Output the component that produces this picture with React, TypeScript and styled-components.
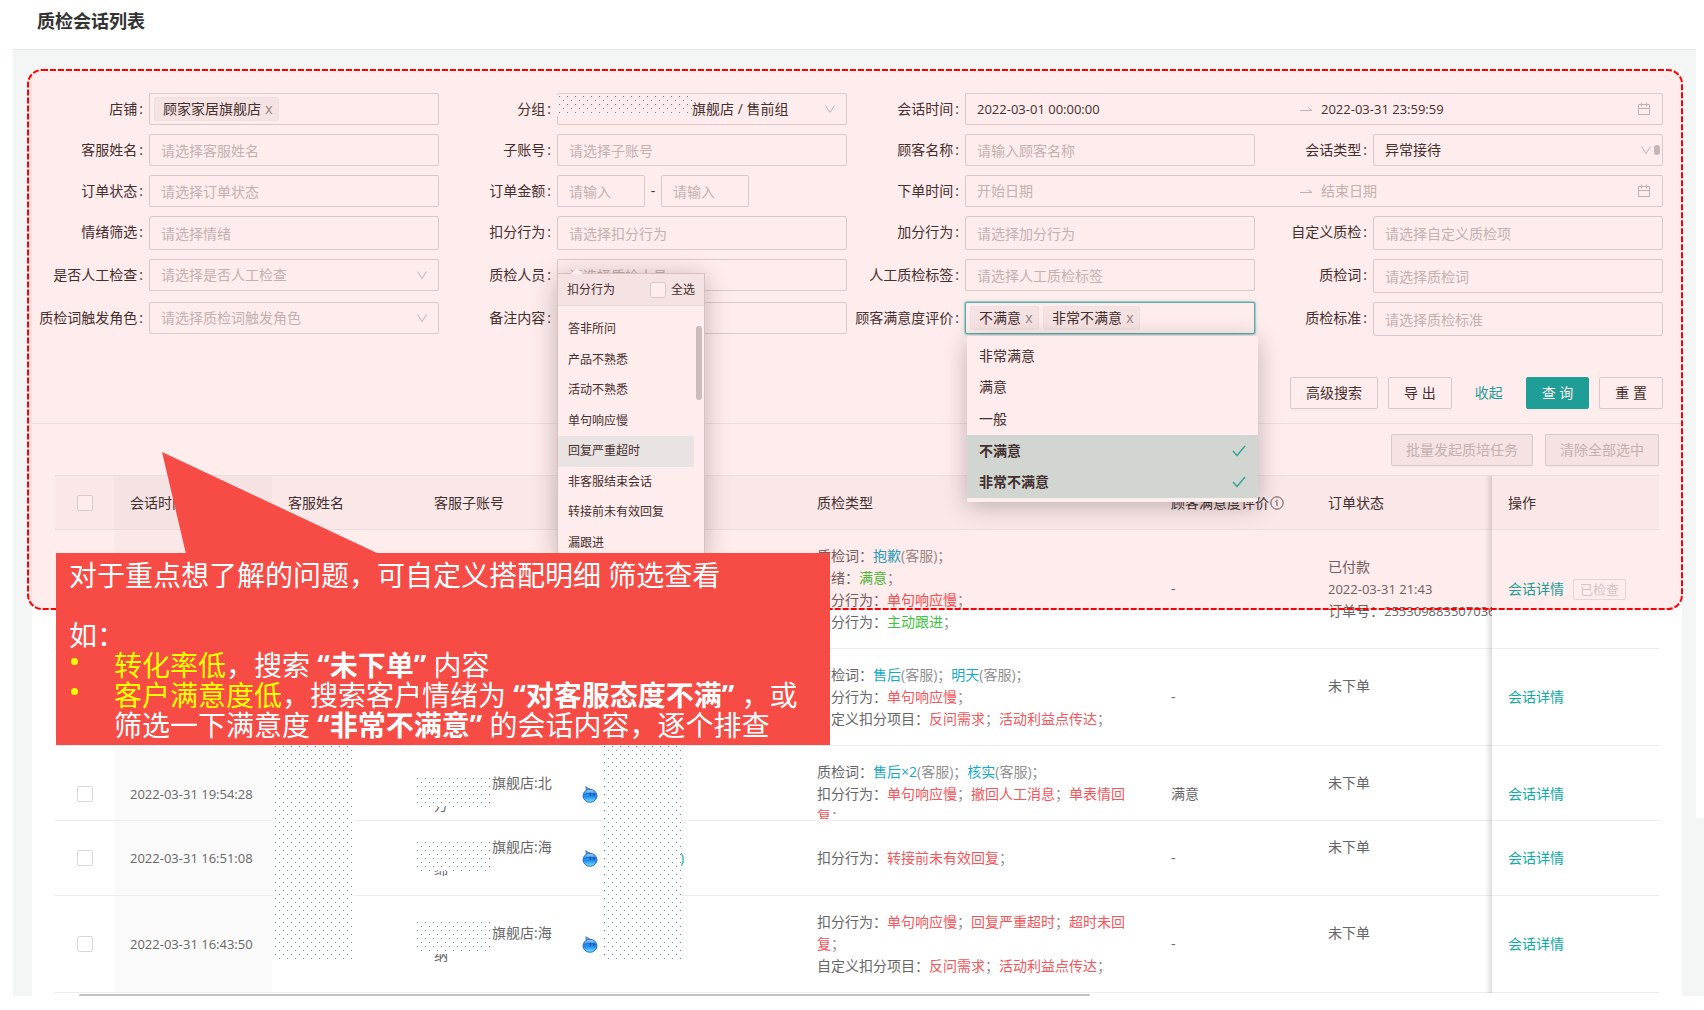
import React, { useId } from "react";
import styled, { createGlobalStyle, css } from "styled-components";

const color = {
  teal: "#0eaba5",
  text: "#333333",
  body: "#666666",
  hint: "#bfbfbf",
  border: "#d9d9d9",
  line: "#ededed",
  page: "#f3f6f5",
  callout: "#f74b46",
};

const GlobalStyle = createGlobalStyle`
  *, *::before, *::after { box-sizing: border-box; }
  body {
    margin: 0;
    background: #ffffff;
    color: ${color.text};
    font: 14px/22px "Open Sans", "Noto Sans CJK SC", sans-serif;
    overflow-x: hidden;
  }
  input, select, button { font: inherit; color: inherit; }
  button { cursor: pointer; }
`;

/* ---------- page frame ---------- */

const Header = styled.header`
  height: 50px;
  margin: 0 8px 0 13px;
  padding: 0 24px;
  display: flex;
  align-items: center;
  border-bottom: 1px solid #e8e8e8;
`;

const Title = styled.h1`
  margin: 0 0 8px;
  font-size: 18px;
  line-height: 26px;
  font-weight: 700;
`;

const Main = styled.main`
  display: flex;
  align-items: flex-start;
  margin-left: 13px;
  background: ${color.page};
`;

const Rail = styled.div`
  width: 8px;
  height: 768px;
  background: #ffffff;
`;

const Card = styled.section`
  position: relative;
  flex: 1;
  min-width: 0;
  margin: 20px 14px 0 19px;
  background: #ffffff;
`;

/* ---------- filter form ---------- */

const Form = styled.form`
  padding: 23px 19px 14px 7px;
  border-bottom: 1px solid ${color.line};
`;

const Grid = styled.div`
  display: grid;
  grid-template-columns: repeat(4, minmax(0, 1fr));
  column-gap: 8px;
  row-gap: 9px;
  align-items: start;
`;

const Item = styled.div<{ $span?: number }>`
  display: flex;
  min-width: 0;
  grid-column: span ${(p) => p.$span || 1};
`;

const Label = styled.label`
  flex: none;
  width: 110px;
  display: flex;
  justify-content: flex-end;
  padding-right: 6px;
  line-height: 32px;
  white-space: nowrap;
  &::after {
    content: ":";
    margin-left: 2px;
  }
`;

const Slot = styled.div`
  position: relative;
  flex: 1;
  min-width: 0;
`;

const frame = css`
  border: 1px solid ${color.border};
  border-radius: 2px;
  background: #ffffff;
`;

const TextBox = styled.input<{ $tall?: boolean }>`
  ${frame};
  display: block;
  width: 100%;
  height: ${(p) => (p.$tall ? 34 : 32)}px;
  padding: 0 11px;
  outline: none;
  &::placeholder { color: ${color.hint}; opacity: 1; }
`;

const Picker = styled.select<{ $empty?: boolean; $indent?: boolean }>`
  ${frame};
  appearance: none;
  display: block;
  width: 100%;
  height: 32px;
  padding: 0 32px 0 ${(p) => (p.$indent ? 134 : 11)}px;
  color: ${(p) => (p.$empty ? color.hint : color.text)};
  outline: none;
`;

const Caret = styled.svg`
  position: absolute;
  right: 11px;
  top: 10px;
  width: 12px;
  height: 12px;
  pointer-events: none;
`;

const Grip = styled.span`
  position: absolute;
  right: 3px;
  top: 11px;
  width: 6px;
  height: 10px;
  border-radius: 3px;
  background: #c4c4c4;
`;

const TagBox = styled.div<{ $active?: boolean }>`
  ${frame};
  display: flex;
  align-items: center;
  gap: 4px;
  height: 32px;
  padding: 0 4px;
  ${(p) =>
    p.$active &&
    css`
      border-color: #4bbab6;
      box-shadow: 0 0 0 1px #4bbab666, 0 0 4px #4bbab666;
    `}
`;

const Tag = styled.span`
  display: flex;
  align-items: center;
  gap: 3px;
  height: 24px;
  padding: 0 4px 0 8px;
  border: 1px solid #f0f0f0;
  border-radius: 2px;
  background: #f5f5f5;
  white-space: nowrap;
`;

const TagClose = styled.button`
  padding: 0;
  width: 10px;
  border: 0;
  background: none;
  color: #8c8c8c;
  line-height: 22px;
`;

const TagInput = styled.input`
  flex: 1;
  min-width: 0;
  border: 0;
  outline: none;
  background: none;
`;

const Range = styled.div`
  ${frame};
  display: flex;
  align-items: center;
  height: 32px;
  padding: 0 11px;
`;

const RangeInput = styled.input`
  flex: 1;
  min-width: 0;
  padding: 0;
  border: 0;
  outline: none;
  background: none;
  font-size: 13px;
  &::placeholder { color: ${color.hint}; opacity: 1; font-size: 14px; }
`;

const RangeArrow = styled.svg`
  flex: none;
  width: 28px;
  height: 12px;
`;

const Amount = styled.div`
  display: grid;
  grid-template-columns: 88px 16px 88px;
  align-items: center;
  text-align: center;
`;

const Actions = styled.div`
  display: flex;
  justify-content: flex-end;
  gap: 10px;
  margin-top: 41px;
`;

type Kind = "plain" | "primary" | "link" | "muted";

const Button = styled.button<{ $kind?: Kind }>`
  height: 32px;
  padding: 0 15px;
  border-radius: 2px;
  border: 1px solid ${color.border};
  background: #ffffff;
  box-shadow: 0 2px 0 rgba(0, 0, 0, 0.02);
  white-space: nowrap;
  ${(p) =>
    p.$kind === "primary" &&
    css`
      border-color: ${color.teal};
      background: ${color.teal};
      color: #ffffff;
    `}
  ${(p) =>
    p.$kind === "link" &&
    css`
      padding: 0 12px;
      border-color: transparent;
      background: none;
      box-shadow: none;
      color: ${color.teal};
    `}
  ${(p) =>
    p.$kind === "muted" &&
    css`
      padding: 0 14px;
      background: #f5f5f5;
      color: ${color.hint};
      cursor: not-allowed;
    `}
`;

/* ---------- popups ---------- */

const Popup = styled.div`
  position: absolute;
  z-index: 5;
  background: #ffffff;
  box-shadow: 0 4px 24px rgba(0, 0, 0, 0.26);
`;

const DeductPopup = styled(Popup)`
  top: 57px;
  left: 0;
  width: 148px;
  border: 1px solid #d4d0d0;
  font-size: 12px;
  &::before {
    content: "";
    position: absolute;
    top: -6px;
    left: 13px;
    border: 6px solid transparent;
    border-top: 0;
    border-bottom-color: #ffffff;
  }
`;

const DeductHead = styled.div`
  display: flex;
  align-items: center;
  justify-content: space-between;
  height: 32px;
  padding: 0 9px;
  border-bottom: 1px solid #e8e8e8;
  background: #f5f5f5;
`;

const CheckLabel = styled.label`
  display: flex;
  align-items: center;
  gap: 5px;
`;

const Check = styled.input.attrs({ type: "checkbox" })`
  appearance: none;
  display: block;
  width: 16px;
  height: 16px;
  margin: 0;
  border: 1px solid ${color.border};
  border-radius: 2px;
  background: #ffffff;
`;

const DeductList = styled.ul`
  display: grid;
  grid-auto-rows: 1fr;
  height: 244px;
  margin: 8px 10px 0 0;
  padding: 0;
  list-style: none;
`;

const DeductOption = styled.li<{ $on?: boolean }>`
  display: flex;
  align-items: center;
  padding-left: 10px;
  background: ${(p) => (p.$on ? "#f9f9f6" : "transparent")};
  background: ${(p) => (p.$on ? "#e8f6f4" : "transparent")};
`;

const Thumb = styled.span`
  position: absolute;
  right: 2px;
  top: 52px;
  width: 6px;
  height: 74px;
  border-radius: 3px;
  background: #cacaca;
`;

const RatePopup = styled(Popup)`
  top: 34px;
  left: 2px;
  right: -3px;
  padding: 4px 0;
  border-radius: 2px;
`;

const RateList = styled.ul`
  display: grid;
  grid-auto-rows: 1fr;
  height: 158px;
  margin: 0;
  padding: 0;
  list-style: none;
`;

const RateOption = styled.li<{ $on?: boolean }>`
  display: flex;
  align-items: center;
  justify-content: space-between;
  padding: 0 12px;
  font-weight: ${(p) => (p.$on ? 700 : 400)};
  background: ${(p) => (p.$on ? "#cfe8e1" : "transparent")};
`;

/* ---------- table ---------- */

const Section = styled.div`
  padding: 10px 23px 0;
`;

const Toolbar = styled.div`
  display: flex;
  justify-content: flex-end;
  gap: 12px;
  margin-bottom: 9px;
`;

const TableWrap = styled.div`
  position: relative;
`;

const Table = styled.table`
  width: 100%;
  table-layout: fixed;
  border-collapse: separate;
  border-spacing: 0;
  color: ${color.body};
`;

const pinned = css`
  position: relative;
  &::before {
    content: "";
    position: absolute;
    top: 0;
    bottom: -1px;
    left: -7px;
    width: 7px;
    background: linear-gradient(to left, rgba(0, 0, 0, 0.13), rgba(0, 0, 0, 0));
  }
`;

const Th = styled.th<{ $sorted?: boolean; $pinned?: boolean }>`
  height: 55px;
  padding: 0 16px;
  border-top: 1px solid ${color.line};
  border-bottom: 1px solid ${color.line};
  background: ${(p) => (p.$sorted ? "#f5f5f5" : "#fafafa")};
  color: ${color.text};
  font-weight: 400;
  text-align: left;
  white-space: nowrap;
  ${(p) => p.$pinned && pinned}
`;

const Td = styled.td<{ $sorted?: boolean; $pinned?: boolean; $cut?: boolean }>`
  padding: 15px 16px ${(p) => (p.$cut ? 1 : 15)}px;
  border-bottom: 1px solid ${color.line};
  background: ${(p) => (p.$sorted ? "#fafafa" : "#ffffff")};
  ${(p) => p.$pinned && pinned}
`;

const Clip = styled.div`
  height: 58px;
  clip-path: inset(0 -40px 0 -40px);
`;

const ClipBody = styled.div`
  display: flex;
  flex-direction: column;
  justify-content: center;
  min-height: 66px;
`;

const Center = styled.div`
  display: flex;
  justify-content: center;
`;

const Stamp = styled.time`
  font-size: 13px;
  white-space: nowrap;
`;

const Lines = styled.div`
  min-height: 44px;
  white-space: nowrap;
`;

const Digits = styled.span`
  font-size: 13px;
`;

const Account = styled.div`
  position: relative;
  height: 44px;
  white-space: nowrap;
`;

const FirstHalf = styled.span`
  display: block;
  padding-left: 58px;
`;

const Buyer = styled.div`
  display: flex;
  align-items: center;
  gap: 82px;
  color: ${color.teal};
`;

const TypeText = styled.div`
  padding-right: 6px;
`;

const Word = styled.span<{ $tone: Tone }>`
  color: ${(p) => tones[p.$tone]};
`;

const Soft = styled.span`
  color: #8f8f8f;
`;

const HeadLabel = styled.span`
  display: flex;
  align-items: center;
  gap: 1px;
`;

const Ops = styled.div`
  display: flex;
  align-items: center;
  gap: 9px;
`;

const Link = styled.a`
  color: ${color.teal};
  text-decoration: none;
  white-space: nowrap;
`;

const DoneButton = styled.button`
  height: 21px;
  padding: 0 6px;
  border: 1px solid #e6e6e6;
  border-radius: 2px;
  background: none;
  color: #d4d4d4;
  font-size: 13px;
  line-height: 19px;
  white-space: nowrap;
`;

const ScrollThumb = styled.div`
  width: 63%;
  height: 2px;
  margin: 1px 0 0 24px;
  border-radius: 1px;
  background: #c1c1c1;
`;

/* ---------- masks, highlight and callout ---------- */

const MaskSvg = styled.svg<{ $x: number; $y: number; $w: number; $h: number }>`
  position: absolute;
  z-index: 2;
  left: ${(p) => p.$x}px;
  top: ${(p) => p.$y}px;
  width: ${(p) => p.$w}px;
  height: ${(p) => p.$h}px;
  background: #ffffff;
`;

const Highlight = styled.svg`
  position: absolute;
  z-index: 10;
  top: -1px;
  left: -5px;
  width: calc(100% + 6px);
  height: 541px;
  pointer-events: none;
`;

const HighlightBox = styled.rect`
  x: 1px;
  y: 1px;
  width: calc(100% - 2px);
  height: 539px;
  rx: 14px;
  fill: rgba(255, 0, 0, 0.075);
  stroke: #ff0000;
  stroke-width: 2px;
  stroke-dasharray: 6 2;
`;

const Callout = styled.aside`
  position: absolute;
  z-index: 20;
  top: 483px;
  left: 24px;
  width: 774px;
  height: 192px;
  padding: 7px 13px;
  background: ${color.callout};
  color: #ffffff;
  font-size: 28px;
  line-height: 30px;
`;

const Tail = styled.svg`
  position: absolute;
  left: 106px;
  top: -101px;
  width: 217px;
  height: 102px;
`;

const Para = styled.p`
  margin: 0;
  min-height: 30px;
`;

const Bullets = styled.ul`
  margin: 0;
  padding: 0 0 0 45px;
  list-style: none;
`;

const Bullet = styled.li`
  position: relative;
  white-space: nowrap;
  &::before {
    content: "";
    position: absolute;
    left: -43px;
    top: 8px;
    width: 7px;
    height: 7px;
    border-radius: 50%;
    background: #ffff00;
  }
`;

const Yellow = styled.span`
  color: #ffff00;
`;

/* ---------- small drawings ---------- */

function Mask({ x, y, w, h }: { x: number; y: number; w: number; h: number }) {
  const id = useId();
  return (
    <MaskSvg $x={x} $y={y} $w={w} $h={h} aria-hidden>
      <defs>
        <pattern id={id} width="8" height="8" patternUnits="userSpaceOnUse">
          <rect x="2" y="1" width="1" height="1" fill="#4f8abf" />
          <rect x="6" y="5" width="1" height="1" fill="#4f8abf" />
        </pattern>
      </defs>
      <rect width="100%" height="100%" fill={`url(#${id})`} />
    </MaskSvg>
  );
}

const Down = () => (
  <Caret viewBox="0 0 12 12" fill="none" stroke="#bfbfbf">
    <path d="M1.5 2.5 6 9.5l4.5-7" />
  </Caret>
);

const Calendar = () => (
  <svg width="14" height="14" viewBox="0 0 14 14" fill="none" stroke="#bfbfbf">
    <path d="M1.5 2.5h11v10h-11zM1.5 6.5h11M4.5 0.5v4M9.5 0.5v4" />
  </svg>
);

const Tick = () => (
  <svg width="14" height="12" viewBox="0 0 14 12" fill="none" stroke="#2fb0ab" strokeWidth="1.5">
    <path d="M1 6l4 4.5L13 1" />
  </svg>
);

const Info = () => (
  <svg width="14" height="14" viewBox="0 0 14 14" fill="none" stroke="#595959">
    <circle cx="7" cy="7" r="6.2" />
    <path d="M7 6.2v4M7 3.6v1.4M5.4 5.5l1.6.7" />
  </svg>
);

const Wang = () => {
  const id = useId();
  return (
    <svg width="16" height="17" viewBox="0 0 16 17">
      <defs>
        <linearGradient id={id} x1="0" y1="0" x2="0" y2="1">
          <stop offset="0" stopColor="#b9dcfa" />
          <stop offset="0.3" stopColor="#3f9bee" />
          <stop offset="0.55" stopColor="#1c8bf0" />
          <stop offset="1" stopColor="#7fe6ff" />
        </linearGradient>
      </defs>
      <path d="M4.600 5C4 3.500 3.400 2 4 .6 4.800 2 7 2 8.600 3.600z" fill="#5d9be0" stroke="#2c6cc4" strokeWidth=".6" />
      <ellipse cx="8" cy="9.800" rx="7" ry="6.500" fill={`url(#${id})`} stroke="#1f62bd" strokeWidth=".9" />
      <path d="M1.600 8.400Q8 6 14.400 8.400" fill="none" stroke="#1a6fd8" strokeWidth="1" />
      <ellipse cx="8.400" cy="8.600" rx=".8" ry="1.300" fill="#0d3f8f" />
      <ellipse cx="11.800" cy="8.600" rx=".8" ry="1.300" fill="#0d3f8f" />
    </svg>
  );
};

/* ---------- field helpers ---------- */

function TextField({ label, hint, tall, children }: { label: string; hint?: string; tall?: boolean; children?: React.ReactNode }) {
  const id = useId();
  return (
    <Item>
      <Label htmlFor={id}>{label}</Label>
      <Slot>
        <TextBox id={id} placeholder={hint} $tall={tall} />
        {children}
      </Slot>
    </Item>
  );
}

function SelectField({ label, value, empty, indent, children }: { label: string; value: string; empty?: boolean; indent?: boolean; children?: React.ReactNode }) {
  const id = useId();
  return (
    <Item>
      <Label htmlFor={id}>{label}</Label>
      <Slot>
        <Picker id={id} $empty={empty} $indent={indent}>
          <option>{value}</option>
        </Picker>
        <Down />
        {children}
      </Slot>
    </Item>
  );
}

function TagField({ label, tags, active, children }: { label: string; tags: string[]; active?: boolean; children?: React.ReactNode }) {
  const id = useId();
  return (
    <Item>
      <Label htmlFor={id}>{label}</Label>
      <Slot>
        <TagBox $active={active}>
          {tags.map((t) => (
            <Tag key={t}>
              {t}
              <TagClose type="button">x</TagClose>
            </Tag>
          ))}
          <TagInput id={id} />
        </TagBox>
        {children}
      </Slot>
    </Item>
  );
}

function RangeField({ label, from, to }: { label: string; from?: string; to?: string }) {
  const id = useId();
  return (
    <Item $span={2}>
      <Label htmlFor={id}>{label}</Label>
      <Slot>
        <Range>
          <RangeInput id={id} defaultValue={from} placeholder="开始日期" />
          <RangeArrow viewBox="0 0 28 12" fill="none" stroke="#bfbfbf">
            <path d="M7 7.500h12l-4-3" />
          </RangeArrow>
          <RangeInput aria-label={`${label}结束`} defaultValue={to} placeholder="结束日期" />
          <Calendar />
        </Range>
      </Slot>
    </Item>
  );
}

function AmountField() {
  const id = useId();
  return (
    <Item>
      <Label htmlFor={id}>订单金额</Label>
      <Slot>
        <Amount>
          <TextBox id={id} placeholder="请输入" />
          <span>-</span>
          <TextBox aria-label="最高订单金额" placeholder="请输入" />
        </Amount>
      </Slot>
    </Item>
  );
}

/* ---------- data ---------- */

type Tone = "blue" | "green" | "red";
const tones: Record<Tone, string> = { blue: "#12aac6", green: "#3dc43d", red: "#f5555a" };

type Hit = { text: string; tone: Tone; by?: string };
type Line = { name: string; hits: Hit[] };
type Row = {
  time: string;
  account?: { first: string; second: string; maskTop: number; maskHeight: number };
  buyer?: string;
  lines: Line[];
  rate: string;
  order: React.ReactNode;
  done?: boolean;
  cut?: boolean;
};

const red = (text: string): Hit => ({ text, tone: "red" });
const blue = (text: string): Hit => ({ text, tone: "blue", by: "(客服)" });

const rows: Row[] = [
  {
    time: "2022-03-31 21:40:16",
    lines: [
      { name: "质检词", hits: [blue("抱歉")] },
      { name: "情绪", hits: [{ text: "满意", tone: "green" }] },
      { name: "扣分行为", hits: [red("单句响应慢")] },
      { name: "加分行为", hits: [{ text: "主动跟进", tone: "green" }] },
    ],
    rate: "-",
    order: (
      <>
        已付款
        <br />
        <Digits>2022-03-31 21:43</Digits>
        <br />
        订单号：<Digits>2553098835070360</Digits>
      </>
    ),
    done: true,
  },
  {
    time: "2022-03-31 20:12:45",
    lines: [
      { name: "质检词", hits: [blue("售后"), blue("明天")] },
      { name: "扣分行为", hits: [red("单句响应慢")] },
      { name: "自定义扣分项目", hits: [red("反问需求"), red("活动利益点传达")] },
    ],
    rate: "-",
    order: "未下单",
  },
  {
    time: "2022-03-31 19:54:28",
    account: { first: "旗舰店:北", second: "方", maskTop: 5, maskHeight: 30 },
    lines: [
      { name: "质检词", hits: [blue("售后×2"), blue("核实")] },
      { name: "扣分行为", hits: [red("单句响应慢"), red("撤回人工消息"), red("单表情回复")] },
    ],
    rate: "满意",
    order: "未下单",
    cut: true,
  },
  {
    time: "2022-03-31 16:51:08",
    account: { first: "旗舰店:海", second: "绵", maskTop: 5, maskHeight: 30 },
    buyer: ")",
    lines: [{ name: "扣分行为", hits: [red("转接前未有效回复")] }],
    rate: "-",
    order: "未下单",
  },
  {
    time: "2022-03-31 16:43:50",
    account: { first: "旗舰店:海", second: "纳", maskTop: -1, maskHeight: 33 },
    lines: [
      { name: "扣分行为", hits: [red("单句响应慢"), red("回复严重超时"), red("超时未回复")] },
      { name: "自定义扣分项目", hits: [red("反问需求"), red("活动利益点传达")] },
    ],
    rate: "-",
    order: "未下单",
  },
];

const deductions = ["答非所问", "产品不熟悉", "活动不熟悉", "单句响应慢", "回复严重超时", "非客服结束会话", "转接前未有效回复", "漏跟进"];
const rates = ["非常满意", "满意", "一般", "不满意", "非常不满意"];

function Cell({ cut, sorted, pin, children }: { cut?: boolean; sorted?: boolean; pin?: boolean; children?: React.ReactNode }) {
  return (
    <Td $cut={cut} $sorted={sorted} $pinned={pin}>
      {cut ? (
        <Clip>
          <ClipBody>{children}</ClipBody>
        </Clip>
      ) : (
        children
      )}
    </Td>
  );
}

function RecordRow({ row }: { row: Row }) {
  const { cut, account } = row;
  return (
    <tr>
      <Cell cut={cut}>
        <Center>
          <Check aria-label={`选择 ${row.time}`} />
        </Center>
      </Cell>
      <Cell cut={cut} sorted>
        <Stamp>{row.time}</Stamp>
      </Cell>
      <Cell cut={cut} />
      <Cell cut={cut}>
        {account && (
          <Account>
            <FirstHalf>{account.first}</FirstHalf>
            {account.second}
            <Mask x={-19} y={account.maskTop} w={77} h={account.maskHeight} />
          </Account>
        )}
      </Cell>
      <Cell cut={cut}>
        <Buyer>
          <Wang />
          {row.buyer}
        </Buyer>
      </Cell>
      <Cell cut={cut}>
        <TypeText>
          {row.lines.map((l) => (
            <div key={l.name}>
              {l.name}：
              {l.hits.map((h) => (
                <React.Fragment key={h.text}>
                  <Word $tone={h.tone}>{h.text}</Word>
                  <Soft>{h.by}；</Soft>
                </React.Fragment>
              ))}
            </div>
          ))}
        </TypeText>
      </Cell>
      <Cell cut={cut}>{row.rate}</Cell>
      <Cell cut={cut}>
        <Lines>{row.order}</Lines>
      </Cell>
      <Cell cut={cut} pin>
        <Ops>
          <Link href="#detail">会话详情</Link>
          {row.done && <DoneButton disabled>已检查</DoneButton>}
        </Ops>
      </Cell>
    </tr>
  );
}

export default function App() {
  return (
    <>
      <GlobalStyle />
      <Header>
        <Title>质检会话列表</Title>
      </Header>
      <Main>
        <Card>
          <Form>
            <Grid>
              <TagField label="店铺" tags={["顾家家居旗舰店"]} />
              <SelectField label="分组" value="旗舰店 / 售前组" indent>
                <Mask x={0} y={2} w={135} h={21} />
              </SelectField>
              <RangeField label="会话时间" from="2022-03-01 00:00:00" to="2022-03-31 23:59:59" />

              <TextField label="客服姓名" hint="请选择客服姓名" />
              <TextField label="子账号" hint="请选择子账号" />
              <TextField label="顾客名称" hint="请输入顾客名称" />
              <SelectField label="会话类型" value="异常接待">
                <Grip />
              </SelectField>

              <TextField label="订单状态" hint="请选择订单状态" />
              <AmountField />
              <RangeField label="下单时间" />

              <TextField label="情绪筛选" hint="请选择情绪" tall />
              <TextField label="扣分行为" hint="请选择扣分行为" tall>
                <DeductPopup>
                  <DeductHead>
                    扣分行为
                    <CheckLabel>
                      <Check />
                      全选
                    </CheckLabel>
                  </DeductHead>
                  <DeductList role="listbox" aria-label="扣分行为">
                    {deductions.map((d) => (
                      <DeductOption key={d} role="option" $on={d === "回复严重超时"}>
                        {d}
                      </DeductOption>
                    ))}
                  </DeductList>
                  <Thumb />
                </DeductPopup>
              </TextField>
              <TextField label="加分行为" hint="请选择加分行为" tall />
              <TextField label="自定义质检" hint="请选择自定义质检项" tall />

              <SelectField label="是否人工检查" value="请选择是否人工检查" empty />
              <TextField label="质检人员" hint="请选择质检人员" />
              <TextField label="人工质检标签" hint="请选择人工质检标签" />
              <TextField label="质检词" hint="请选择质检词" tall />

              <SelectField label="质检词触发角色" value="请选择质检词触发角色" empty />
              <TextField label="备注内容" />
              <TagField label="顾客满意度评价" tags={["不满意", "非常不满意"]} active>
                <RatePopup>
                  <RateList role="listbox" aria-label="顾客满意度评价">
                    {rates.map((r, i) => (
                      <RateOption key={r} role="option" $on={i > 2}>
                        {r}
                        {i > 2 && <Tick />}
                      </RateOption>
                    ))}
                  </RateList>
                </RatePopup>
              </TagField>
              <TextField label="质检标准" hint="请选择质检标准" tall />
            </Grid>
            <Actions>
              <Button type="button">高级搜索</Button>
              <Button type="button">导 出</Button>
              <Button type="button" $kind="link">收起</Button>
              <Button type="button" $kind="primary">查 询</Button>
              <Button type="button">重 置</Button>
            </Actions>
          </Form>

          <Section>
            <Toolbar>
              <Button $kind="muted" disabled>批量发起质培任务</Button>
              <Button $kind="muted" disabled>清除全部选中</Button>
            </Toolbar>
            <TableWrap>
              <Table>
                <colgroup>
                  <col width="59" />
                  <col width="158" />
                  <col width="146" />
                  <col width="148" />
                  <col width="235" />
                  <col />
                  <col width="157" />
                  <col width="180" />
                  <col width="167" />
                </colgroup>
                <thead>
                  <tr>
                    <Th>
                      <Center>
                        <Check aria-label="全选" />
                      </Center>
                    </Th>
                    <Th $sorted>会话时间</Th>
                    <Th>客服姓名</Th>
                    <Th>客服子账号</Th>
                    <Th />
                    <Th>质检类型</Th>
                    <Th>
                      <HeadLabel>
                        顾客满意度评价
                        <Info />
                      </HeadLabel>
                    </Th>
                    <Th>订单状态</Th>
                    <Th $pinned>操作</Th>
                  </tr>
                </thead>
                <tbody>
                  {rows.map((r) => (
                    <RecordRow key={r.time} row={r} />
                  ))}
                </tbody>
              </Table>
              <Mask x={218} y={230} w={81} h={254} />
              <Mask x={547} y={230} w={79} h={254} />
            </TableWrap>
            <ScrollThumb />
          </Section>

          <Highlight aria-hidden>
            <HighlightBox />
          </Highlight>

          <Callout>
            <Tail viewBox="0 0 217 102">
              <path d="M0 0 217 102H24z" fill={color.callout} />
            </Tail>
            <Para>对于重点想了解的问题，可自定义搭配明细 筛选查看</Para>
            <Para />
            <Para>如：</Para>
            <Bullets>
              <Bullet>
                <Yellow>转化率低</Yellow>，搜索 <b>“未下单”</b> 内容
              </Bullet>
              <Bullet>
                <Yellow>客户满意度低</Yellow>，搜索客户情绪为 <b>“对客服态度不满”</b> ，或
                <br />
                筛选一下满意度 <b>“非常不满意”</b> 的会话内容，逐个排查
              </Bullet>
            </Bullets>
          </Callout>
        </Card>
        <Rail />
      </Main>
    </>
  );
}
